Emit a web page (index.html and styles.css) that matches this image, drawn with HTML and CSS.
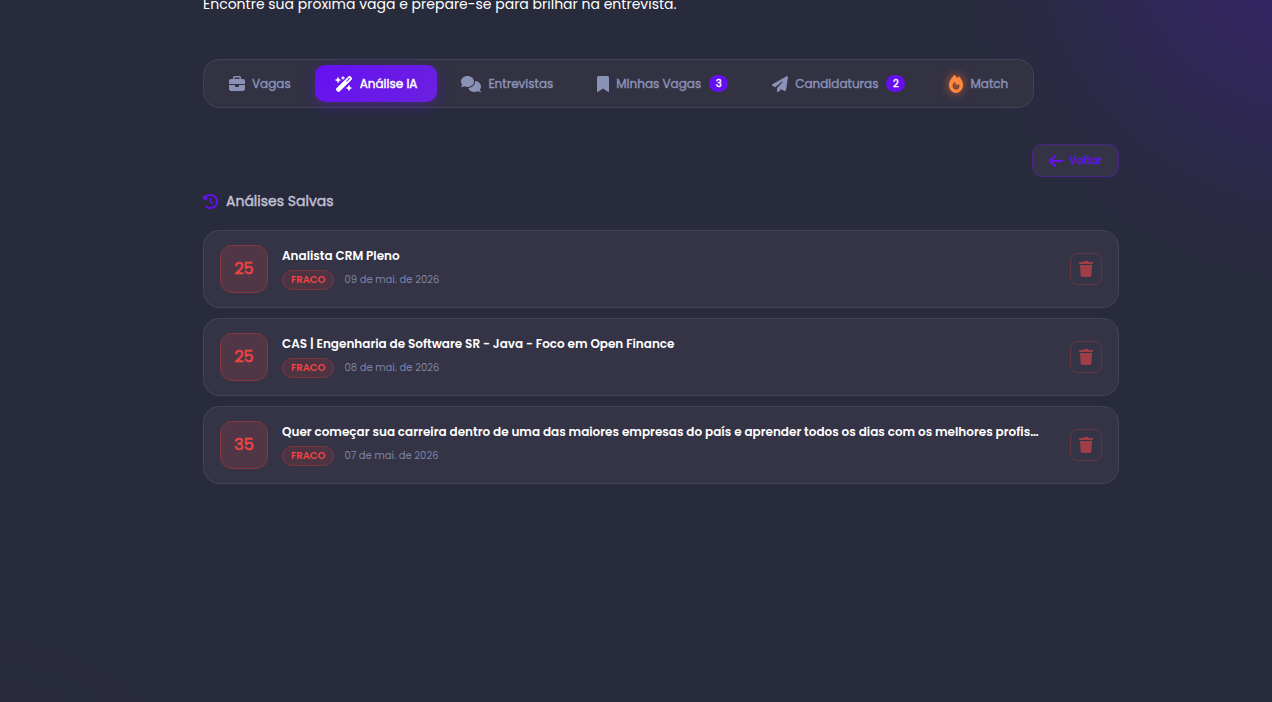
FILE: index.html
```html
<!DOCTYPE html>
<html lang="pt-BR">
<head>
<meta charset="utf-8">
<meta name="viewport" content="width=device-width, initial-scale=1">
<title>Análise IA</title>
<link rel="stylesheet" href="styles.css">
</head>
<body>
<svg class="sprite" aria-hidden="true">
  <symbol id="trash" viewBox="0 0 448 512"><path d="M135.2 17.7L128 32H32C14.3 32 0 46.3 0 64S14.3 96 32 96H416c17.7 0 32-14.3 32-32s-14.3-32-32-32H320l-7.2-14.3C307.4 6.8 296.3 0 284.2 0H163.8c-12.1 0-23.2 6.8-28.6 17.7zM416 128H32L53.2 467c1.6 25.3 22.6 45 47.9 45H346.9c25.3 0 46.3-19.7 47.9-45L416 128z"/></symbol>
</svg>
<main class="page">
  <p class="intro">Encontre sua próxima vaga e prepare-se para brilhar na entrevista.</p>

  <nav class="tabs" aria-label="Seções">
    <button class="tab" type="button">
      <svg class="icon" viewBox="0 0 512 512" width="16" height="16" aria-hidden="true"><path d="M184 48H328c4.400 0 8 3.600 8 8V96H176V56c0-4.400 3.600-8 8-8zm-56 8V96H64C28.700 96 0 124.700 0 160v96H192 320 512V160c0-35.300-28.700-64-64-64H384V56c0-30.900-25.100-56-56-56H184c-30.900 0-56 25.100-56 56zM512 288H320v32c0 17.700-14.300 32-32 32H224c-17.700 0-32-14.300-32-32V288H0V416c0 35.300 28.700 64 64 64H448c35.300 0 64-28.700 64-64V288z"/></svg>
      <span>Vagas</span>
    </button>
    <button class="tab tab-active" type="button" aria-current="page">
      <svg class="icon" viewBox="0 0 576 512" width="18" height="16" aria-hidden="true"><path d="M234.700 42.700L197 56.800c-3 1.100-5 4-5 7.200s2 6.100 5 7.200l37.700 14.100L248.800 123c1.100 3 4 5 7.200 5s6.100-2 7.200-5l14.100-37.700L315 71.200c3-1.100 5-4 5-7.200s-2-6.100-5-7.200L277.300 42.700 263.200 5c-1.100-3-4-5-7.200-5s-6.100 2-7.200 5L234.700 42.700zM46.100 395.400c-18.700 18.700-18.700 49.100 0 67.900l34.600 34.600c18.700 18.700 49.100 18.700 67.900 0L529.900 116.500c18.700-18.700 18.700-49.100 0-67.900L495.300 14.100c-18.700-18.700-49.100-18.700-67.900 0L46.100 395.400zM484.600 82.600l-105 105-23.300-23.300 105-105 23.300 23.300zM7.500 117.200C3 118.900 0 123.200 0 128s3 9.100 7.500 10.800L64 160l21.200 56.500c1.700 4.500 6 7.500 10.800 7.500s9.100-3 10.800-7.500L128 160l56.500-21.200c4.500-1.700 7.500-6 7.500-10.800s-3-9.100-7.500-10.800L128 96 106.800 39.500C105.100 35 100.800 32 96 32s-9.100 3-10.800 7.500L64 96 7.500 117.200zm352 256c-4.500 1.700-7.500 6-7.500 10.800s3 9.100 7.500 10.800L416 416l21.200 56.500c1.700 4.500 6 7.500 10.800 7.500s9.100-3 10.800-7.500L480 416l56.500-21.200c4.500-1.700 7.500-6 7.500-10.800s-3-9.100-7.500-10.800L480 352l-21.200-56.500c-1.700-4.500-6-7.500-10.800-7.500s-9.100 3-10.800 7.500L416 352l-56.500 21.200z"/></svg>
      <span>Análise IA</span>
    </button>
    <button class="tab" type="button">
      <svg class="icon" viewBox="0 0 640 512" width="20" height="16" aria-hidden="true"><path d="M208 352c114.900 0 208-78.800 208-176S322.900 0 208 0S0 78.800 0 176c0 38.600 14.700 74.300 39.600 103.400c-3.500 9.400-8.700 17.700-14.200 24.700c-4.800 6.200-9.700 11-13.300 14.300c-1.800 1.600-3.300 2.900-4.300 3.700c-.5 .4-.9 .7-1.100 .8l-.2 .2C1 327.200-1.400 334.400 .8 340.900S9.100 352 16 352c21.800 0 43.800-5.600 62.100-12.500c9.200-3.500 17.800-7.400 25.200-11.400C134.100 343.300 169.800 352 208 352zM448 176c0 112.300-99.100 196.900-216.500 207C255.800 457.400 336.400 512 432 512c38.200 0 73.900-8.700 104.700-23.900c7.500 4 16 7.900 25.200 11.400c18.300 6.900 40.300 12.500 62.100 12.500c6.900 0 13.100-4.500 15.200-11.100c2.100-6.600-.2-13.800-5.800-17.900l-.2-.2c-.2-.2-.6-.4-1.100-.8c-1-.8-2.500-2-4.300-3.700c-3.600-3.300-8.500-8.100-13.300-14.300c-5.500-7-10.700-15.400-14.200-24.700c24.900-29 39.600-64.700 39.600-103.400c0-92.800-84.900-168.900-192.600-175.500c.4 5.100 .6 10.300 .6 15.500z"/></svg>
      <span>Entrevistas</span>
    </button>
    <button class="tab" type="button">
      <svg class="icon" viewBox="0 0 384 512" width="12" height="16" aria-hidden="true"><path d="M0 48V487.700C0 501.100 10.900 512 24.300 512c5 0 9.900-1.500 14-4.400L192 400 345.700 507.600c4.100 2.900 9 4.400 14 4.400c13.400 0 24.300-10.900 24.300-24.300V48c0-26.500-21.500-48-48-48H48C21.500 0 0 21.500 0 48z"/></svg>
      <span>Minhas Vagas</span>
      <span class="badge">3</span>
    </button>
    <button class="tab" type="button">
      <svg class="icon" viewBox="0 0 512 512" width="16" height="16" aria-hidden="true"><path d="M498.100 5.600c10.100 7 15.400 19.100 13.500 31.200l-64 416c-1.500 9.700-7.400 18.200-16 23s-18.900 5.400-28 1.600L284 427.700l-68.500 74.100c-8.900 9.700-22.900 12.900-35.200 8.100S160 493.200 160 480V396.400c0-4 1.500-7.800 4.200-10.700L331.800 202.800c5.800-6.300 5.600-16-.4-22s-15.700-6.400-22-.7L106 360.800 17.700 316.600C7.100 311.300 .3 300.700 0 288.900s5.900-22.800 16.100-28.700l448-256c10.700-6.100 23.900-5.500 34 1.400z"/></svg>
      <span>Candidaturas</span>
      <span class="badge">2</span>
    </button>
    <button class="tab" type="button">
      <svg class="icon icon-fire" viewBox="0 0 448 512" width="14" height="18" preserveAspectRatio="none" aria-hidden="true"><path d="M159.300 5.400c7.800-7.300 19.900-7.200 27.700 .1c27.600 25.900 53.500 53.800 77.700 84c11-14.400 23.500-30.100 37-42.900c7.900-7.400 20.100-7.400 28 .1c34.600 33 63.900 76.600 84.500 118c20.300 40.800 33.800 82.500 33.800 111.900C448 404.200 348.200 512 224 512C98.400 512 0 404.100 0 276.500c0-38.400 17.800-85.300 45.400-131.700C73.300 97.700 112.700 48.600 159.300 5.400zM225.700 416c25.300 0 47.700-7 68.800-21c42.100-29.400 53.400-88.200 28.100-134.400c-4.500-9-16-9.600-22.500-2l-25.200 29.300c-6.600 7.600-18.500 7.400-24.700-.5c-16.500-21-46-58.500-62.800-79.800c-6.300-8-18.300-8.100-24.700-.1c-33.800 42.500-50.800 69.300-50.800 99.400C112 375.400 162.600 416 225.700 416z"/></svg>
      <span>Match</span>
    </button>
  </nav>

  <div class="actions">
    <button class="back" type="button">
      <svg class="icon" viewBox="0 0 448 512" width="14" height="16" aria-hidden="true"><path d="M9.400 233.400c-12.500 12.500-12.500 32.800 0 45.300l160 160c12.500 12.500 32.800 12.500 45.300 0s12.500-32.800 0-45.300L109.200 288 416 288c17.700 0 32-14.300 32-32s-14.300-32-32-32l-306.700 0L214.600 118.600c12.500-12.500 12.500-32.800 0-45.300s-32.800-12.500-45.300 0l-160 160z"/></svg>
      <span>Voltar</span>
    </button>
  </div>

  <h2 class="heading">
    <svg class="icon" viewBox="0 0 512 512" width="15" height="15" aria-hidden="true"><path d="M75 75L41 41C25.900 25.900 0 36.600 0 57.900V168c0 13.300 10.700 24 24 24H134.100c21.400 0 32.100-25.900 17-41l-30.800-30.800C155 85.500 203 64 256 64c106 0 192 86 192 192s-86 192-192 192c-40.800 0-78.600-12.700-109.700-34.400c-14.500-10.100-34.400-6.600-44.600 7.900s-6.600 34.400 7.900 44.600C151.200 495 201.700 512 256 512c141.400 0 256-114.600 256-256S397.400 0 256 0C185.300 0 121.300 28.700 75 75zm181 53c-13.300 0-24 10.700-24 24V256c0 6.400 2.500 12.500 7 17l72 72c9.400 9.400 24.600 9.400 33.900 0s9.400-24.600 0-33.900l-65-65V152c0-13.300-10.700-24-24-24z"/></svg>
    <span>Análises Salvas</span>
  </h2>

  <ul class="list">
    <li class="card">
      <div class="score">25</div>
      <div class="info">
        <h3 class="title">Analista CRM Pleno</h3>
        <div class="meta"><span class="pill">FRACO</span><span class="date">09 de mai. de 2026</span></div>
      </div>
      <button class="remove" type="button" aria-label="Excluir"><svg class="icon" width="14" height="16"><use href="#trash"/></svg></button>
    </li>
    <li class="card">
      <div class="score">25</div>
      <div class="info">
        <h3 class="title">CAS | Engenharia de Software SR - Java - Foco em Open Finance</h3>
        <div class="meta"><span class="pill">FRACO</span><span class="date">08 de mai. de 2026</span></div>
      </div>
      <button class="remove" type="button" aria-label="Excluir"><svg class="icon" width="14" height="16"><use href="#trash"/></svg></button>
    </li>
    <li class="card">
      <div class="score">35</div>
      <div class="info">
        <h3 class="title">Quer começar sua carreira dentro de uma das maiores empresas do país e aprender todos os dias com os melhores profis…</h3>
        <div class="meta"><span class="pill">FRACO</span><span class="date">07 de mai. de 2026</span></div>
      </div>
      <button class="remove" type="button" aria-label="Excluir"><svg class="icon" width="14" height="16"><use href="#trash"/></svg></button>
    </li>
  </ul>
</main>
</body>
</html>
```
FILE: styles.css
```css
* {
  box-sizing: border-box;
}

body {
  margin: 0;
  min-height: 100vh;
  padding-left: 50px;
  overflow: hidden;
  font-family: Poppins, Inter, "Open Sans", sans-serif;
  color: #fff;
  background:
    radial-gradient(circle at calc(100% + 50px) -80px, rgba(92, 16, 242, 0.26) 0, rgba(92, 16, 242, 0.21) 100px, rgba(92, 16, 242, 0.06) 280px, transparent 390px),
    radial-gradient(circle at -30px calc(100% + 200px), rgba(106, 17, 203, 0.06) 0, transparent 290px),
    #282b3c;
}

button {
  font: inherit;
  cursor: pointer;
}

.sprite {
  display: none;
}

.icon {
  flex: none;
  fill: currentColor;
}

.page {
  max-width: 916px;
  margin: 0 auto;
}

.intro {
  margin: -8px 0 43px;
  font-size: 14px;
  line-height: 24px;
}

.tabs {
  display: flex;
  gap: 4px;
  width: fit-content;
  padding: 5px;
  border: 1px solid #424254;
  border-radius: 16px;
  background: #323243;
}

.tab {
  display: flex;
  align-items: center;
  gap: 7px;
  height: 37px;
  padding: 0 20px;
  border: 0;
  border-radius: 10px;
  background: none;
  color: #8b92b8;
  font-size: 12px;
  font-weight: 400;
  line-height: 16px;
  -webkit-text-stroke: 0.4px currentColor;
  white-space: nowrap;
}

.tab-active {
  color: #fff;
  background: linear-gradient(135deg, #6610f2, #6b21e0);
  box-shadow: 0 4px 16px rgba(102, 16, 242, 0.3);
}

.badge {
  min-width: 19px;
  margin-left: 1px;
  padding: 0 6px;
  border-radius: 10px;
  background: #6610f2;
  color: #fff;
  font-size: 10px;
  font-weight: 400;
  line-height: 17px;
}

.icon-fire {
  overflow: visible;
  color: #ff8a3d;
  filter: drop-shadow(0 0 5px rgba(255, 107, 40, 0.9));
}

.actions {
  display: flex;
  justify-content: flex-end;
  margin-top: 36px;
}

.back {
  display: flex;
  align-items: center;
  gap: 6px;
  height: 33px;
  padding: 0 16px;
  border: 1px solid #47268a;
  border-radius: 10px;
  background: #343446;
  color: #6610f2;
  font-size: 11px;
  font-weight: 400;
  -webkit-text-stroke: 0.4px currentColor;
}

.heading {
  display: flex;
  align-items: center;
  gap: 8px;
  margin: 12px 0 17px;
  color: #c3c2d6;
  font-size: 14px;
  font-weight: 400;
  line-height: 24px;
  -webkit-text-stroke: 0.4px currentColor;
}

.heading .icon {
  color: #6610f2;
}

.list {
  display: grid;
  grid-template-columns: minmax(0, 1fr);
  gap: 10px;
  margin: 0;
  padding: 0;
  list-style: none;
}

.card {
  display: flex;
  align-items: center;
  gap: 14px;
  padding: 14px 16px;
  border: 1px solid #444456;
  border-radius: 16px;
  background: #343446;
}

.score {
  display: grid;
  flex: none;
  place-items: center;
  width: 48px;
  height: 48px;
  border: 1px solid #853642;
  border-radius: 12px;
  background: #513645;
  color: #ef4444;
  font-size: 16px;
  font-weight: 400;
  line-height: 24px;
  -webkit-text-stroke: 0.6px currentColor;
}

.info {
  flex: 1;
  min-width: 0;
  padding-bottom: 2px;
}

.title {
  margin: 0 0 4px;
  overflow: hidden;
  font-size: 12px;
  font-weight: 600;
  line-height: 20px;
  text-overflow: ellipsis;
  white-space: nowrap;
}

.meta {
  display: flex;
  align-items: center;
  gap: 10px;
}

.pill {
  padding: 0 8px;
  border: 1px solid #7c3440;
  border-radius: 10px;
  background: #4c3443;
  color: #ef4444;
  font-size: 10px;
  font-weight: 600;
  line-height: 18px;
}

.date {
  color: #7c83a8;
  font-size: 10px;
}

.remove {
  display: grid;
  flex: none;
  place-items: center;
  width: 32px;
  height: 32px;
  padding: 0;
  border: 1px solid #633444;
  border-radius: 8px;
  background: none;
  color: #9f3d48;
}
```
